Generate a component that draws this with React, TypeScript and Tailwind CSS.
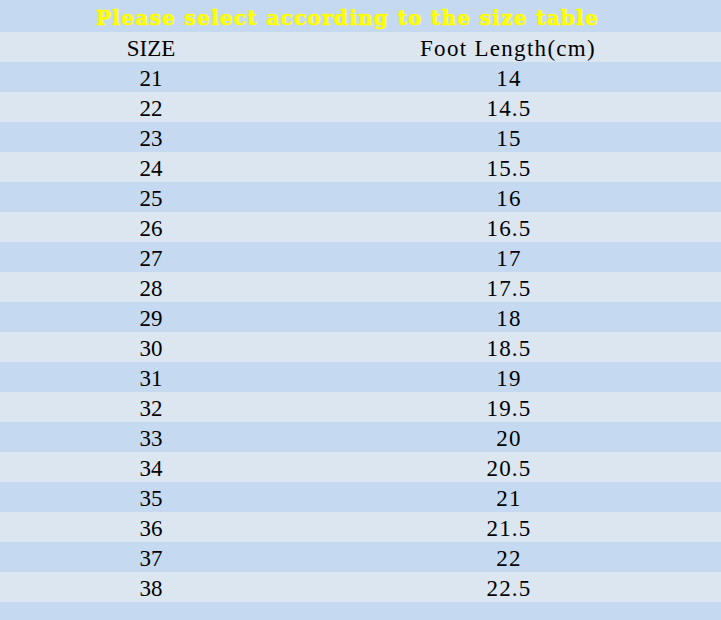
import React from "react";

const rows: [string, string][] = [
  ["21", "14"],
  ["22", "14.5"],
  ["23", "15"],
  ["24", "15.5"],
  ["25", "16"],
  ["26", "16.5"],
  ["27", "17"],
  ["28", "17.5"],
  ["29", "18"],
  ["30", "18.5"],
  ["31", "19"],
  ["32", "19.5"],
  ["33", "20"],
  ["34", "20.5"],
  ["35", "21"],
  ["36", "21.5"],
  ["37", "22"],
  ["38", "22.5"],
];

export default function App() {
  return (
    <div className="w-[721px] h-[620px] overflow-hidden bg-[#c5d9f1] text-black [font-family:'Liberation_Serif',serif]">
      <div className="h-[32px] flex items-center pl-[96px] pt-[4px]">
        <span className="text-[20px] font-bold text-[#ffff00] [font-family:'DejaVu_Serif',serif] leading-none tracking-[1.3px] [-webkit-text-stroke:0.6px_#ffff00]">
          Please select according to the size table
        </span>
      </div>
      <div className="h-[30px] grid grid-cols-[302px_412px] items-center bg-[#dce6f1] text-[23px] leading-none pt-[3px]">
        <div className="text-center">SIZE</div>
        <div className="text-center tracking-[1.3px]">Foot Length(cm)</div>
      </div>
      {rows.map(([s, l], i) => (
        <div
          key={s}
          className={`h-[30px] grid grid-cols-[302px_412px] items-center text-[23px] leading-none pt-[3px] ${
            i % 2 === 0 ? "bg-[#c5d9f1]" : "bg-[#dce6f1]"
          }`}
        >
          <div className="text-center">{s}</div>
          <div className="text-center pl-[2px] tracking-[1.2px]">{l}</div>
        </div>
      ))}
    </div>
  );
}
